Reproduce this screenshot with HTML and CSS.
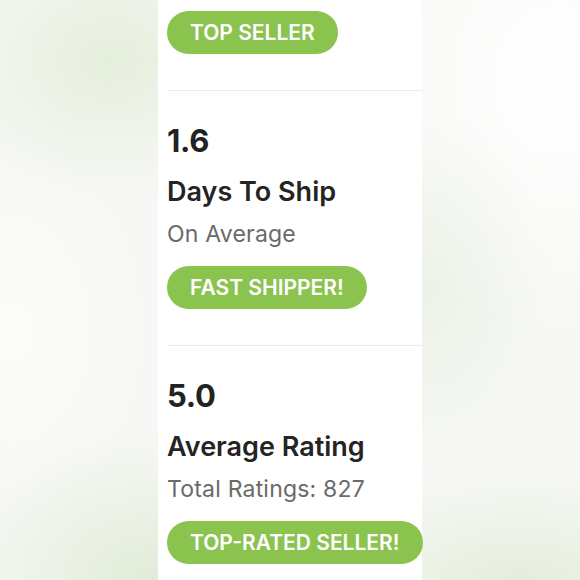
FILE: index.html
```html
<!DOCTYPE html>
<html lang="en">
<head>
<meta charset="utf-8">
<title>Seller stats</title>
<link rel="stylesheet" href="styles.css">
</head>
<body>
<main class="panel">
  <section class="stat stat--first">
    <span class="badge">TOP SELLER</span>
  </section>
  <section class="stat">
    <div class="stat__value">1.6</div>
    <div class="stat__title">Days To Ship</div>
    <div class="stat__sub">On Average</div>
    <span class="badge">FAST SHIPPER!</span>
  </section>
  <section class="stat">
    <div class="stat__value">5.0</div>
    <div class="stat__title">Average Rating</div>
    <div class="stat__sub">Total Ratings: 827</div>
    <span class="badge">TOP-RATED SELLER!</span>
  </section>
</main>
</body>
</html>
```
FILE: styles.css
```css
html, body {
  margin: 0;
  padding: 0;
  height: 100%;
}
body {
  font-family: Inter, "Liberation Sans", sans-serif;
  background-color: #f7f8f5;
  background-image:
    radial-gradient(ellipse 180px 140px at 110px 60px, rgba(222, 234, 210, 0.7), rgba(222, 234, 210, 0)),
    radial-gradient(ellipse 200px 150px at 150px 580px, rgba(218, 232, 206, 0.75), rgba(218, 232, 206, 0)),
    radial-gradient(ellipse 220px 120px at 520px 590px, rgba(220, 233, 208, 0.75), rgba(220, 233, 208, 0)),
    radial-gradient(ellipse 120px 180px at 430px 290px, rgba(230, 238, 223, 0.6), rgba(230, 238, 223, 0)),
    radial-gradient(ellipse 220px 260px at 560px 80px, rgba(255, 255, 255, 0.95), rgba(255, 255, 255, 0)),
    radial-gradient(ellipse 140px 200px at 10px 330px, rgba(252, 252, 251, 0.9), rgba(252, 252, 251, 0));
  overflow: hidden;
}
.panel {
  width: 264px;
  margin: 0 auto;
  min-height: 100%;
  background: #ffffff;
  padding-left: 9px;
  box-sizing: border-box;
}
.stat {
  display: flex;
  flex-direction: column;
  align-items: flex-start;
  padding: 30px 0 36px;
  border-top: 1px solid #ececec;
}
.stat--first {
  padding-top: 11px;
  border-top: none;
}
.stat__value {
  font-size: 31px;
  line-height: 40px;
  font-weight: 700;
  color: #222222;
  letter-spacing: -0.3px;
}
.stat__title {
  margin-top: 16px;
  font-size: 27px;
  line-height: 30px;
  font-weight: 600;
  color: #242424;
}
.stat__sub {
  margin-top: 13px;
  font-size: 23px;
  line-height: 28px;
  font-weight: 400;
  color: #6a6a6a;
  letter-spacing: 0.2px;
}
.stat__sub + .badge {
  margin-top: 18px;
}
.badge {
  display: inline-flex;
  align-items: center;
  height: 43px;
  padding: 0 23px;
  border-radius: 22px;
  background: #8bc34f;
  color: #ffffff;
  font-size: 21px;
  font-weight: 600;
  letter-spacing: 0;
  white-space: nowrap;
  box-sizing: border-box;
}
```
